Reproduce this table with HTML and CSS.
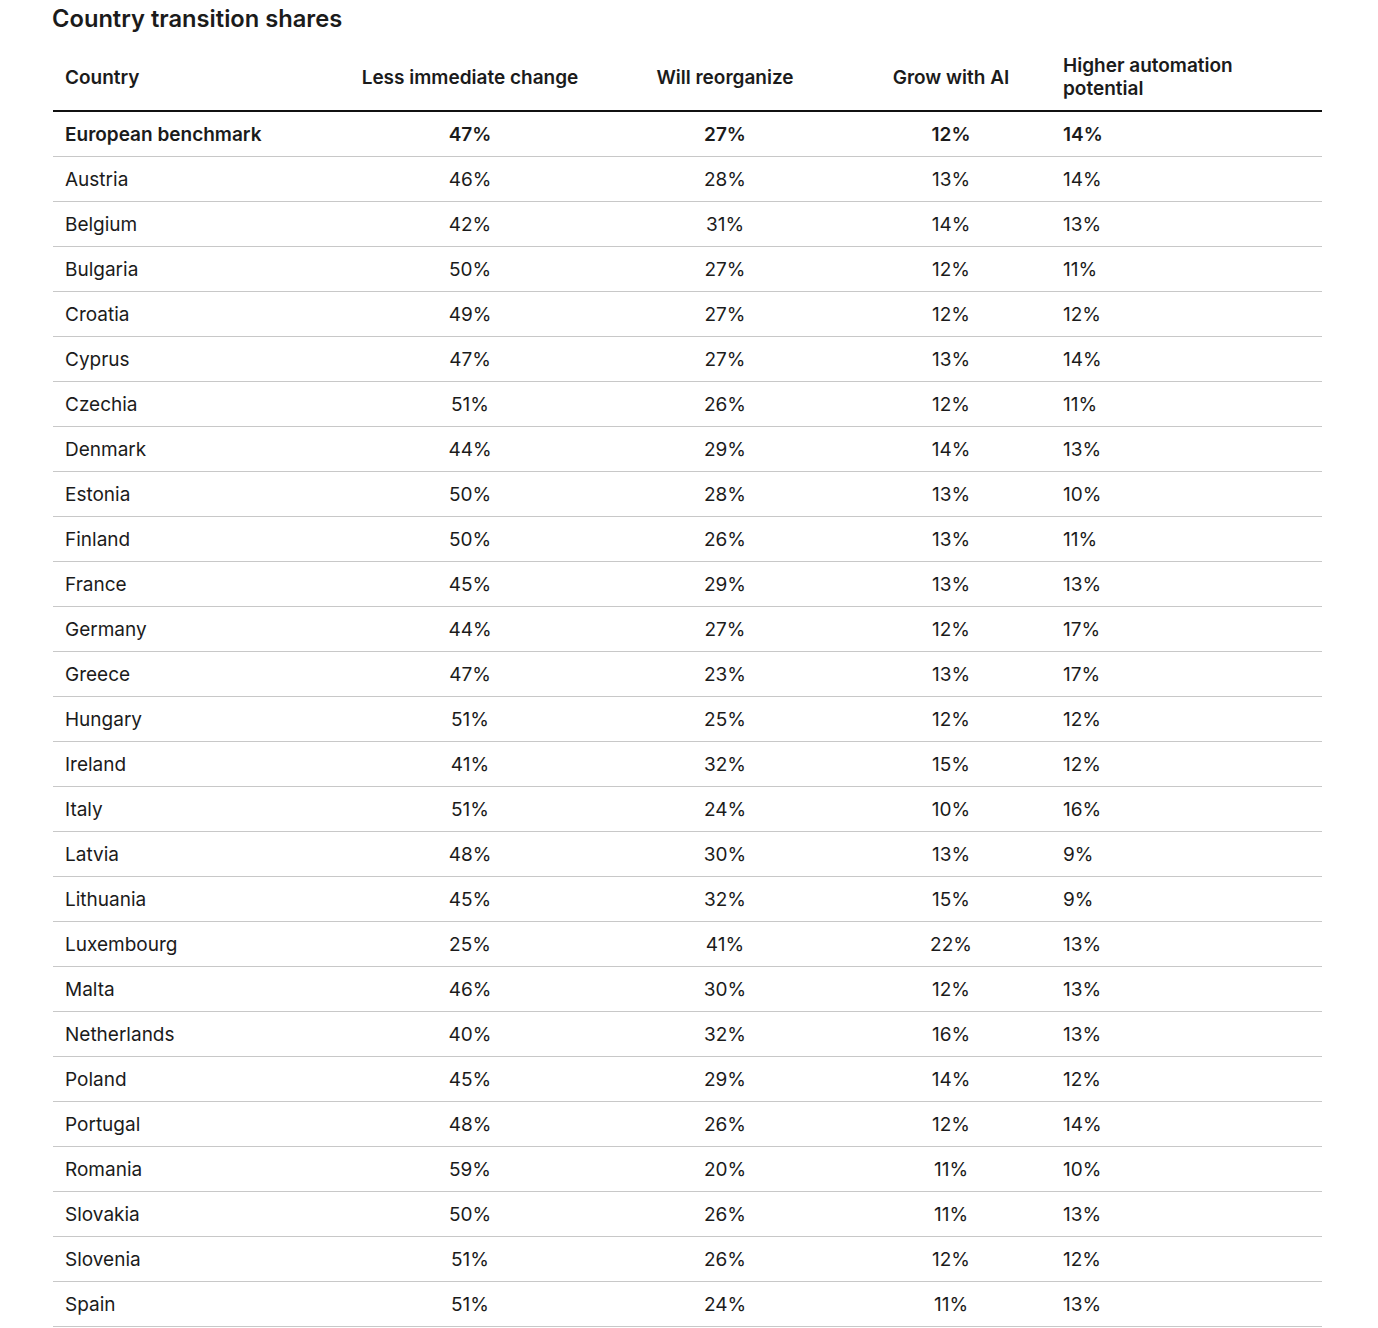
FILE: index.html
```html
<!DOCTYPE html>
<html lang="en">
<head>
<meta charset="utf-8">
<title>Country transition shares</title>
<link rel="stylesheet" href="styles.css">
</head>
<body>
<div class="page">
  <h2 class="title">Country transition shares</h2>
  <table class="shares">
    <colgroup>
      <col class="c-country">
      <col class="c-less">
      <col class="c-reorg">
      <col class="c-grow">
      <col class="c-auto">
    </colgroup>
    <thead>
      <tr>
        <th class="left">Country</th>
        <th>Less immediate change</th>
        <th>Will reorganize</th>
        <th>Grow with AI</th>
        <th class="left">Higher automation<br>potential</th>
      </tr>
    </thead>
    <tbody>
      <tr class="bench"><td class="left">European benchmark</td><td>47%</td><td>27%</td><td>12%</td><td class="left">14%</td></tr>
      <tr><td class="left">Austria</td><td>46%</td><td>28%</td><td>13%</td><td class="left">14%</td></tr>
      <tr><td class="left">Belgium</td><td>42%</td><td>31%</td><td>14%</td><td class="left">13%</td></tr>
      <tr><td class="left">Bulgaria</td><td>50%</td><td>27%</td><td>12%</td><td class="left">11%</td></tr>
      <tr><td class="left">Croatia</td><td>49%</td><td>27%</td><td>12%</td><td class="left">12%</td></tr>
      <tr><td class="left">Cyprus</td><td>47%</td><td>27%</td><td>13%</td><td class="left">14%</td></tr>
      <tr><td class="left">Czechia</td><td>51%</td><td>26%</td><td>12%</td><td class="left">11%</td></tr>
      <tr><td class="left">Denmark</td><td>44%</td><td>29%</td><td>14%</td><td class="left">13%</td></tr>
      <tr><td class="left">Estonia</td><td>50%</td><td>28%</td><td>13%</td><td class="left">10%</td></tr>
      <tr><td class="left">Finland</td><td>50%</td><td>26%</td><td>13%</td><td class="left">11%</td></tr>
      <tr><td class="left">France</td><td>45%</td><td>29%</td><td>13%</td><td class="left">13%</td></tr>
      <tr><td class="left">Germany</td><td>44%</td><td>27%</td><td>12%</td><td class="left">17%</td></tr>
      <tr><td class="left">Greece</td><td>47%</td><td>23%</td><td>13%</td><td class="left">17%</td></tr>
      <tr><td class="left">Hungary</td><td>51%</td><td>25%</td><td>12%</td><td class="left">12%</td></tr>
      <tr><td class="left">Ireland</td><td>41%</td><td>32%</td><td>15%</td><td class="left">12%</td></tr>
      <tr><td class="left">Italy</td><td>51%</td><td>24%</td><td>10%</td><td class="left">16%</td></tr>
      <tr><td class="left">Latvia</td><td>48%</td><td>30%</td><td>13%</td><td class="left">9%</td></tr>
      <tr><td class="left">Lithuania</td><td>45%</td><td>32%</td><td>15%</td><td class="left">9%</td></tr>
      <tr><td class="left">Luxembourg</td><td>25%</td><td>41%</td><td>22%</td><td class="left">13%</td></tr>
      <tr><td class="left">Malta</td><td>46%</td><td>30%</td><td>12%</td><td class="left">13%</td></tr>
      <tr><td class="left">Netherlands</td><td>40%</td><td>32%</td><td>16%</td><td class="left">13%</td></tr>
      <tr><td class="left">Poland</td><td>45%</td><td>29%</td><td>14%</td><td class="left">12%</td></tr>
      <tr><td class="left">Portugal</td><td>48%</td><td>26%</td><td>12%</td><td class="left">14%</td></tr>
      <tr><td class="left">Romania</td><td>59%</td><td>20%</td><td>11%</td><td class="left">10%</td></tr>
      <tr><td class="left">Slovakia</td><td>50%</td><td>26%</td><td>11%</td><td class="left">13%</td></tr>
      <tr><td class="left">Slovenia</td><td>51%</td><td>26%</td><td>12%</td><td class="left">12%</td></tr>
      <tr><td class="left">Spain</td><td>51%</td><td>24%</td><td>11%</td><td class="left">13%</td></tr>
    </tbody>
  </table>
</div>
</body>
</html>
```

FILE: styles.css
```css
html, body {
  margin: 0;
  padding: 0;
  background: #ffffff;
}

body {
  font-family: Inter, "Noto Sans", "Liberation Sans", sans-serif;
  color: #1b1b1b;
}

.page {
  padding: 0 56px 0 53px;
}

.title {
  margin: 4px 0 11px -1px;
  font-size: 23.7px;
  line-height: 29px;
  font-weight: 600;
  letter-spacing: 0;
}

.shares {
  width: 1269px;
  border-collapse: collapse;
  table-layout: fixed;
  font-size: 19px;
}

.c-country { width: 288px; }
.c-less { width: 258px; }
.c-reorg { width: 252px; }
.c-grow { width: 200px; }
.c-auto { width: 271px; }

.shares th {
  padding: 10px 12px 10px;
  line-height: 23px;
  font-weight: 600;
  text-align: center;
  vertical-align: middle;
  border-bottom: 2px solid #111111;
}

.shares th .spacer {
  display: none;
}

.shares td {
  padding: 12px 12px 10px;
  line-height: 22px;
  text-align: center;
  border-bottom: 1px solid #c8c8c8;
}

.shares th.left,
.shares td.left {
  text-align: left;
}

.bench td {
  font-weight: 600;
}
```
